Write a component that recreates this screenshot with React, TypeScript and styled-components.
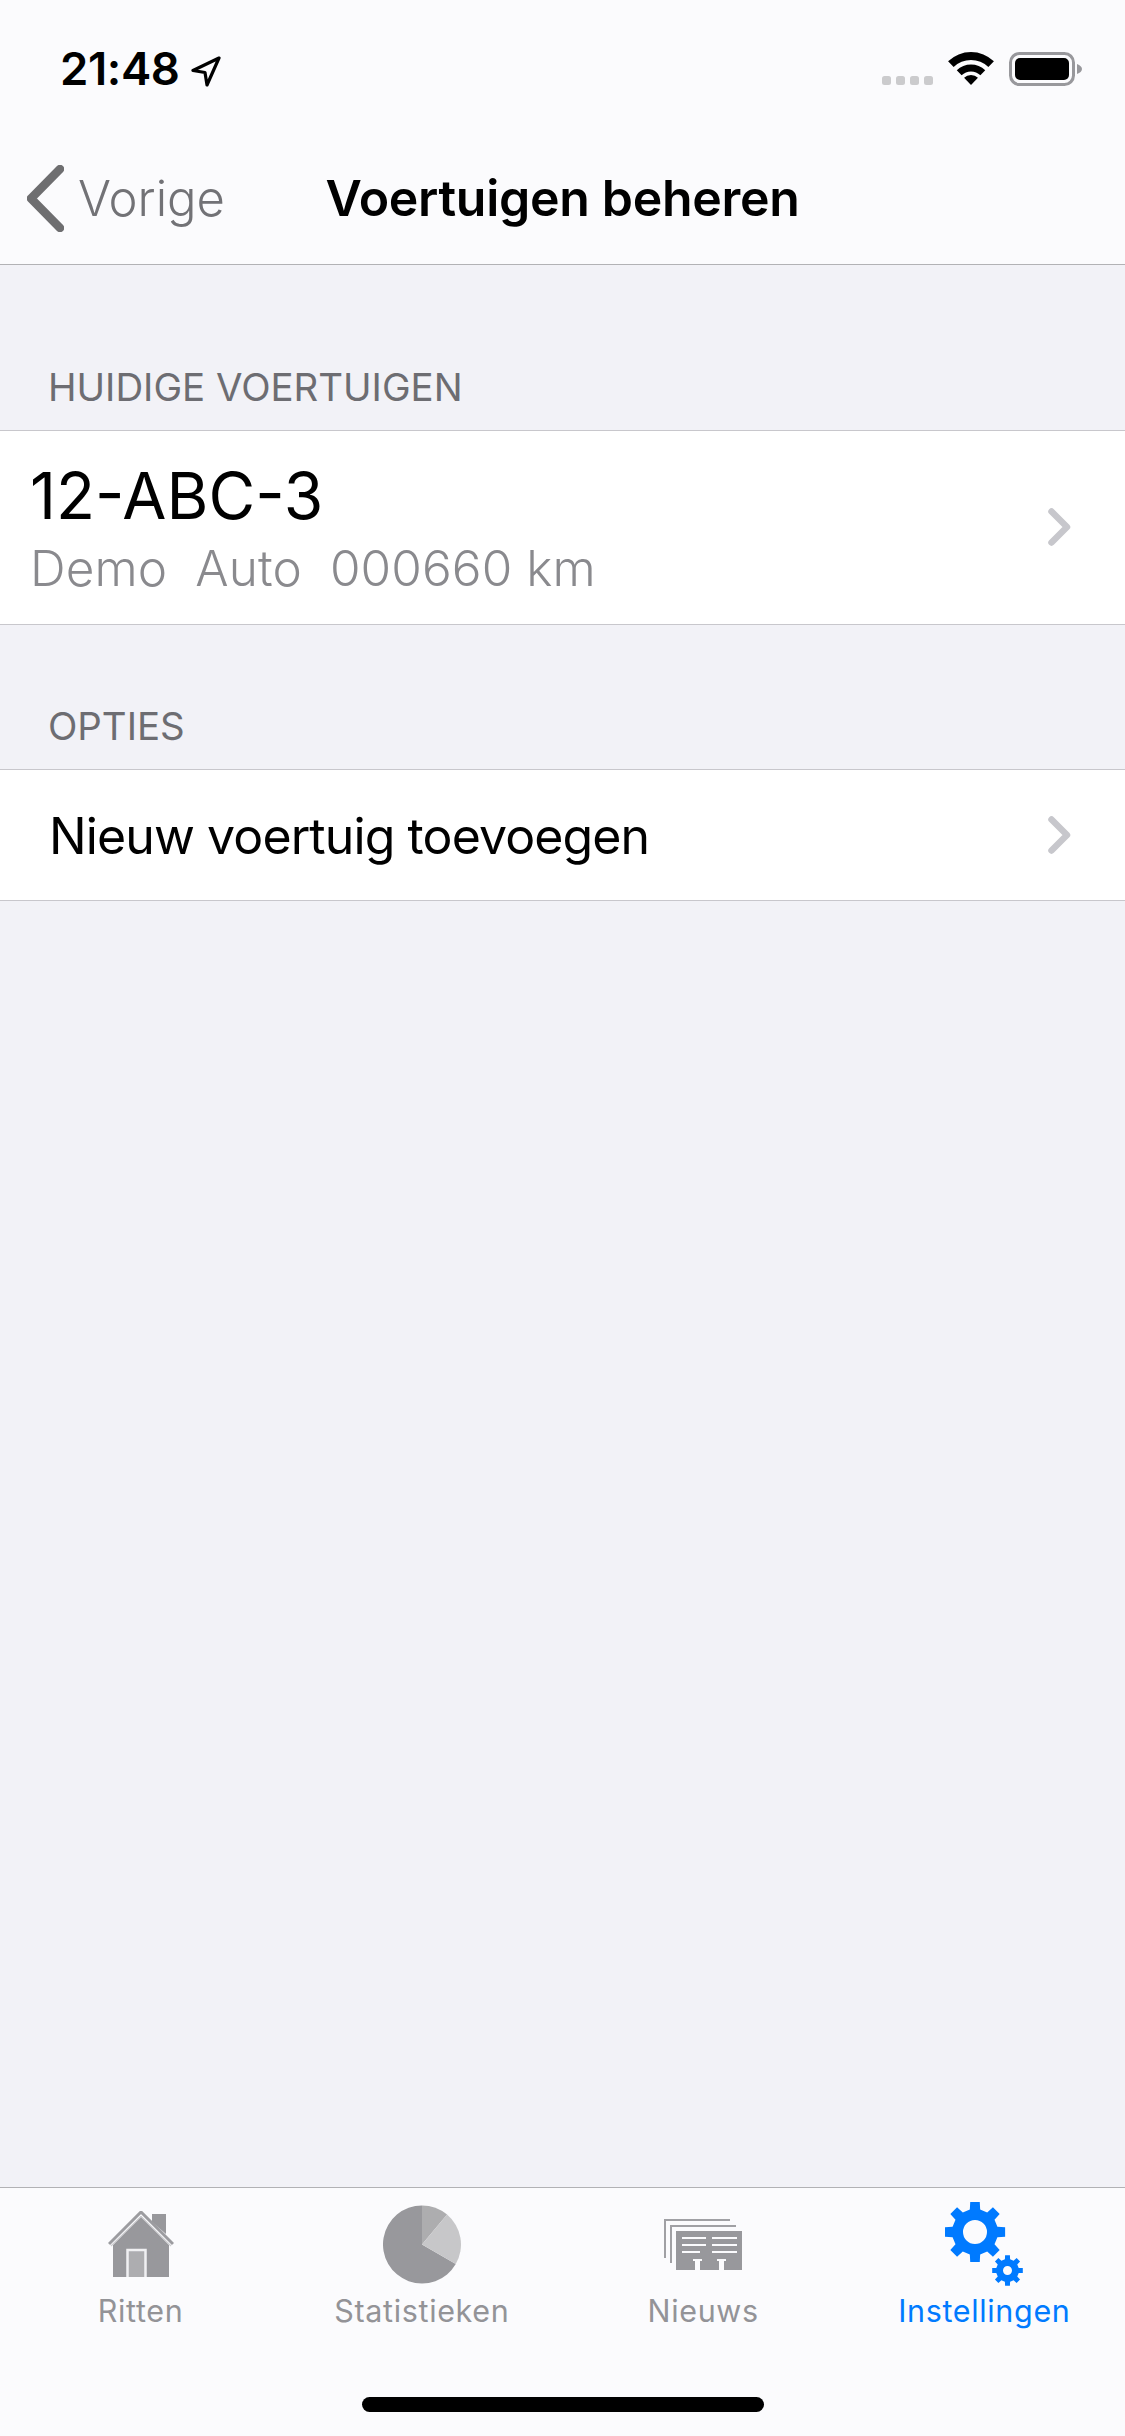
import React from "react";
import styled, { createGlobalStyle } from "styled-components";

const GlobalStyle = createGlobalStyle`
  html, body {
    margin: 0;
    padding: 0;
    background: #f2f2f7;
  }
  * {
    box-sizing: border-box;
  }
`;

const Page = styled.div`
  display: flex;
  flex-direction: column;
  width: 1125px;
  height: 2436px;
  overflow: hidden;
  background: #f2f2f7;
  font-family: Inter, "Liberation Sans", sans-serif;
  color: #000;
`;

const Header = styled.header`
  background: #fbfbfd;
  border-bottom: 1.5px solid #b2b2b5;
`;

const StatusBar = styled.div`
  display: flex;
  justify-content: space-between;
  height: 132px;
  padding: 42px 43px 0 60px;
`;

const StatusLeft = styled.div`
  display: flex;
  align-items: flex-start;
  gap: 11px;
`;

const Clock = styled.span`
  font-size: 45.5px;
  font-weight: 600;
  line-height: 54px;
  letter-spacing: -0.4px;
`;

const LocationIcon = styled.svg`
  width: 30px;
  height: 31px;
  margin-top: 14px;
`;

const StatusRight = styled.div`
  display: flex;
  align-items: flex-start;
  padding-top: 10px;
`;

const SignalDots = styled.div`
  display: flex;
  gap: 5px;
  margin: 24px 15px 0 0;
`;

const SignalDot = styled.span`
  width: 9px;
  height: 9px;
  border-radius: 2.5px;
  background: #cbcbcd;
`;

const WifiIcon = styled.svg`
  width: 46px;
  height: 33px;
  margin-right: 15px;
`;

const BatteryIcon = styled.svg`
  width: 73px;
  height: 34px;
`;

const NavBar = styled.nav`
  display: grid;
  grid-template-columns: 1fr auto 1fr;
  align-items: center;
  height: 132px;
  padding: 0 27px;
`;

const BackButton = styled.div`
  display: flex;
  align-items: center;
  gap: 14px;
  color: #727276;
  font-size: 49px;
  font-weight: 300;
`;

const BackChevron = styled.svg`
  width: 37px;
  height: 67px;
`;

const NavTitle = styled.h1`
  margin: 0;
  font-size: 50px;
  font-weight: 600;
  letter-spacing: -0.3px;
`;

const Content = styled.main`
  flex: 1;
`;

const SectionTitle = styled.div<{ $height: number }>`
  display: flex;
  align-items: flex-end;
  height: ${(p) => p.$height}px;
  padding: 0 0 20px 48px;
  color: #6d6d72;
  font-size: 38.4px;
  line-height: 46px;
`;

const Row = styled.div<{ $height: number }>`
  display: flex;
  align-items: center;
  justify-content: space-between;
  height: ${(p) => p.$height}px;
  padding-right: 54px;
  background: #fff;
  border-top: 1.5px solid #c8c7cc;
  border-bottom: 1.5px solid #c8c7cc;
`;

const VehicleText = styled.div`
  display: flex;
  flex-direction: column;
  gap: 7px;
  padding-left: 30px;
  margin-top: -4px;
`;

const VehiclePlate = styled.div`
  font-size: 64px;
  line-height: 78px;
`;

const VehicleDetails = styled.div`
  color: #8a8a8e;
  font-size: 49.5px;
  font-weight: 350;
  line-height: 52px;
  letter-spacing: 0.1px;
  white-space: pre;
`;

const RowLabel = styled.div`
  padding: 2px 0 0 49px;
  font-size: 50px;
  letter-spacing: -0.9px;
`;

const Disclosure = styled.svg`
  width: 23px;
  height: 38px;
  margin-top: -1px;
`;

const TabBar = styled.footer`
  position: relative;
  display: grid;
  grid-template-columns: repeat(4, 1fr);
  height: 249px;
  padding-top: 11px;
  background: #fbfbfd;
  border-top: 1.5px solid #b2b2b5;
`;

const Tab = styled.div<{ $active?: boolean }>`
  display: flex;
  flex-direction: column;
  align-items: center;
  color: ${(p) => (p.$active ? "#007aff" : "#939397")};
  font-size: 30.5px;
  line-height: 36px;
  letter-spacing: 0.65px;
`;

const TabIconSlot = styled.div`
  display: flex;
  align-items: center;
  justify-content: center;
  height: 90px;
  margin-bottom: 4px;
`;

const HomeIndicator = styled.div`
  position: absolute;
  left: 362px;
  bottom: 24px;
  width: 402px;
  height: 15px;
  border-radius: 8px;
  background: #000;
`;

const polar = (cx: number, cy: number, r: number, deg: number) => {
  const a = ((deg - 90) * Math.PI) / 180;
  return `${(cx + r * Math.cos(a)).toFixed(2)} ${(cy + r * Math.sin(a)).toFixed(2)}`;
};

const gearPath = (cx: number, cy: number, outer: number, root: number, hole: number) => {
  const points: string[] = [];
  for (let i = 0; i < 8; i++) {
    const c = i * 45;
    points.push(polar(cx, cy, root, c - 13), polar(cx, cy, outer, c - 9), polar(cx, cy, outer, c + 9), polar(cx, cy, root, c + 13));
  }
  const ring = `M${polar(cx, cy, hole, 0)}A${hole} ${hole} 0 1 0 ${polar(cx, cy, hole, 180)}A${hole} ${hole} 0 1 0 ${polar(cx, cy, hole, 0)}Z`;
  return `M${points.join("L")}Z${ring}`;
};

const wifiBand = (inner: number, outer: number) => {
  const cx = 23;
  const cy = 33;
  const s = 44;
  const start = `M${polar(cx, cy, outer, -s)}A${outer} ${outer} 0 0 1 ${polar(cx, cy, outer, s)}`;
  if (inner === 0) return `${start}L${cx} ${cy}Z`;
  return `${start}L${polar(cx, cy, inner, s)}A${inner} ${inner} 0 0 0 ${polar(cx, cy, inner, -s)}Z`;
};

const pieSlice = (from: number, to: number) => {
  const large = to - from > 180 ? 1 : 0;
  return `M39 39.5L${polar(39, 39.5, 39, from)}A39 39 0 ${large} 1 ${polar(39, 39.5, 39, to)}Z`;
};

const HouseIcon = () => (
  <svg width="66" height="66" viewBox="0 0 66 66">
    <path d="M44 3h14v20l-14-12z" fill="#98989c" />
    <path d="M5 34L33 5l28 29v32H5z" fill="#98989c" />
    <path d="M1 33L33 1l32 32" fill="none" stroke="#9c9ca0" strokeWidth="3" />
    <path d="M3 35L33 5.5l30 29.5" fill="none" stroke="#cfcfd2" strokeWidth="1.2" />
    <path d="M19.5 66V39h18v27" fill="#adadb0" stroke="#f0f0f2" strokeWidth="2.5" />
  </svg>
);

const PieIcon = () => (
  <svg width="78" height="79" viewBox="0 0 78 79">
    <path d={pieSlice(120, 360)} fill="#98989c" />
    <path d={pieSlice(0, 40)} fill="#adadaf" />
    <path d={pieSlice(40, 120)} fill="#c7c7c9" />
  </svg>
);

const NewsIcon = () => (
  <svg width="78" height="51" viewBox="0 0 78 51">
    <path d="M1 39V1h65M7 44V7h65" fill="none" stroke="#a0a0a4" strokeWidth="2" />
    <rect x="12" y="12" width="66" height="39" fill="#98989c" />
    <path d="M18 19h24M48 19h25M18 26h24M48 26h25M18 33h18M48 33h25" stroke="#fbfbfd" strokeWidth="2.2" />
    <path d="M29 40h9v2h-2v9h-5v-9h-2zM53 40h9v2h-2v9h-5v-9h-2z" fill="#fbfbfd" />
  </svg>
);

const GearsIcon = () => (
  <svg width="78" height="84" viewBox="0 0 78 84">
    <path d={gearPath(30, 30, 30.5, 23, 12)} fill="#007aff" fillRule="evenodd" />
    <path d={gearPath(62.5, 68.5, 15.5, 11.5, 4.5)} fill="#007aff" fillRule="evenodd" />
  </svg>
);

const ChevronRight = () => (
  <Disclosure viewBox="0 0 23 38">
    <path d="M3.5 3.5L19 19L3.5 34.5" fill="none" stroke="#c7c7cc" strokeWidth="6.5" strokeLinecap="round" strokeLinejoin="round" />
  </Disclosure>
);

const tabs = [
  { label: "Ritten", icon: <HouseIcon /> },
  { label: "Statistieken", icon: <PieIcon /> },
  { label: "Nieuws", icon: <NewsIcon /> },
  { label: "Instellingen", icon: <GearsIcon />, active: true },
];

const App = () => {
  return (
    <Page>
      <GlobalStyle />
      <Header>
        <StatusBar>
          <StatusLeft>
            <Clock>21:48</Clock>
            <LocationIcon viewBox="0 0 30 31">
              <path d="M28 2L2 14.5L14 16.5L16 29z" fill="none" stroke="#000" strokeWidth="3.2" strokeLinejoin="round" />
            </LocationIcon>
          </StatusLeft>
          <StatusRight>
            <SignalDots>
              <SignalDot />
              <SignalDot />
              <SignalDot />
              <SignalDot />
            </SignalDots>
            <WifiIcon viewBox="0 0 46 33">
              <path d={wifiBand(25, 33)} />
              <path d={wifiBand(13.5, 20.5)} />
              <path d={wifiBand(0, 10)} />
            </WifiIcon>
            <BatteryIcon viewBox="0 0 73 34">
              <rect x="1.5" y="1.5" width="63" height="31" rx="9" fill="none" stroke="#98989c" strokeWidth="3" />
              <rect x="6" y="6" width="54" height="22" rx="5" />
              <path d="M68 12c3 1 5 3 5 5s-2 4-5 5z" fill="#98989c" />
            </BatteryIcon>
          </StatusRight>
        </StatusBar>
        <NavBar>
          <BackButton>
            <BackChevron viewBox="0 0 37 67">
              <path d="M33 4L4 33.5L33 63" fill="none" stroke="#6e6e70" strokeWidth="8.5" strokeLinecap="round" strokeLinejoin="round" />
            </BackChevron>
            Vorige
          </BackButton>
          <NavTitle>Voertuigen beheren</NavTitle>
        </NavBar>
      </Header>
      <Content>
        <SectionTitle $height={165}>HUIDIGE VOERTUIGEN</SectionTitle>
        <Row $height={195}>
          <VehicleText>
            <VehiclePlate>12-ABC-3</VehiclePlate>
            <VehicleDetails>{"Demo  Auto  000660 km"}</VehicleDetails>
          </VehicleText>
          <ChevronRight />
        </Row>
        <SectionTitle $height={144}>OPTIES</SectionTitle>
        <Row $height={132}>
          <RowLabel>Nieuw voertuig toevoegen</RowLabel>
          <ChevronRight />
        </Row>
      </Content>
      <TabBar>
        {tabs.map((tab) => (
          <Tab key={tab.label} $active={tab.active}>
            <TabIconSlot>{tab.icon}</TabIconSlot>
            {tab.label}
          </Tab>
        ))}
        <HomeIndicator />
      </TabBar>
    </Page>
  );
};

export default App;
